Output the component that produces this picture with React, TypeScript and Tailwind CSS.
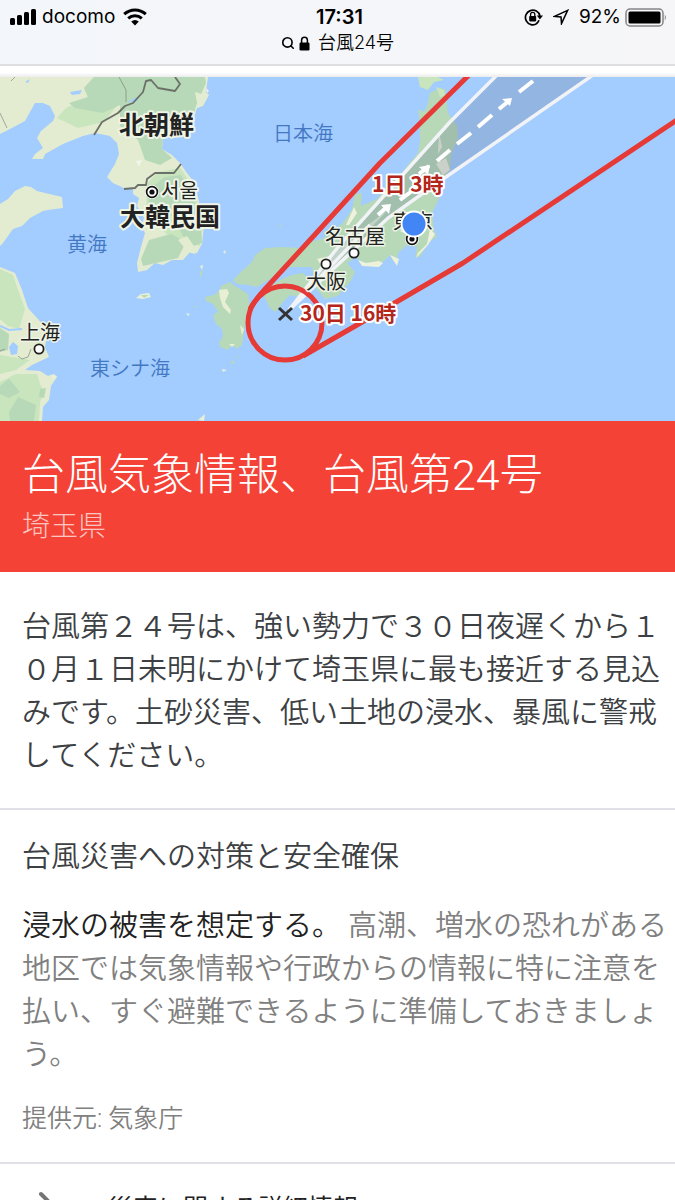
import { ChevronRight, Search } from "lucide-react";
import type { ReactNode } from "react";

const jp = "font-['Roboto','Noto_Sans_CJK_JP',sans-serif]";

const dashes = [
  "M400 200L412 191",
  "M419 174L429 166",
  "M437 161L450 150",
  "M457 144L471 133",
  "M478 127L492 115",
  "M499 109L510 100",
  "M519 92L533 81",
];

const seas = [
  { name: "日本海", x: 273, y: 141 },
  { name: "黄海", x: 67, y: 252 },
  { name: "東シナ海", x: 90, y: 376 },
];

const cities = [
  { name: "上海", x: 20, y: 340 },
  { name: "名古屋", x: 325, y: 244 },
  { name: "大阪", x: 306, y: 289 },
  { name: "東京", x: 393, y: 229 },
];

function StatusBar() {
  return (
    <header className="h-[66px] border-b-2 border-[#dfdfe1] bg-gradient-to-r from-[#f3f6fa] to-[#f6f6f8] px-2 font-['Inter','Noto_Sans_CJK_JP',sans-serif] text-black">
      <div className="grid grid-cols-3 items-center pt-1">
        <div className="flex items-center">
          <svg width="28" height="18" viewBox="0 0 28 18" aria-label="電波">
            <rect x="2" y="10" width="5" height="7" rx="1.5" />
            <rect x="9" y="7" width="5" height="10" rx="1.5" />
            <rect x="16" y="4" width="5" height="13" rx="1.5" />
            <rect x="23" y="1" width="5" height="16" rx="1.5" />
          </svg>
          <span className="ml-1.5 text-[19px] leading-[26px]">docomo</span>
          <svg className="ml-2" width="24" height="18" viewBox="0 0 24 18" aria-label="Wi-Fi">
            <g fill="none" stroke="#000" strokeWidth="3">
              <path d="M1.2 6.2C7.4.6 16.6.6 22.8 6.2" />
              <path d="M5.2 10.4C9.2 6.8 14.8 6.8 18.8 10.4" />
            </g>
            <path d="M8.2 13.4Q12 10.4 15.8 13.4L12 17.4Z" />
          </svg>
        </div>
        <div className="pl-1 text-center text-[20px] leading-[26px] font-semibold">17:31</div>
        <div className="flex items-center justify-end">
          <svg width="19" height="18" viewBox="0 0 19 18" aria-label="画面の向きをロック">
            <path
              d="M13 15.4A7.3 7.3 0 1 1 15.9 8M12 16A7.3 7.3 0 0 0 15 12.3"
              fill="none"
              stroke="#000"
              strokeWidth="1.7"
            />
            <path d="M12.8 7.6H19L15.9 11.4Z" />
            <rect x="5.2" y="8" width="7" height="5.4" rx=".8" />
            <path d="M6.6 8V6.4a2.1 2.1 0 0 1 4.2 0V8" fill="none" stroke="#000" strokeWidth="1.3" />
          </svg>
          <svg className="ml-2.5" width="16" height="16" viewBox="0 0 16 16" aria-label="位置情報">
            <path d="M14.6 1.4L1.6 7.4L8 8L8.5 14.6Z" fill="none" stroke="#000" strokeWidth="1.5" />
          </svg>
          <span className="ml-2.5 text-[19px] leading-[26px]">92%</span>
          <svg className="ml-1" width="42" height="19" viewBox="0 0 42 19" aria-label="バッテリー">
            <rect x="1" y="1" width="37" height="17" rx="4" fill="none" stroke="#858587" strokeWidth="1.5" />
            <rect x="3.5" y="3.5" width="32" height="12" rx="1.5" />
            <path d="M39.8 6.5Q42 9.5 39.8 12.5Z" fill="#858587" />
          </svg>
        </div>
      </div>
      <div className="flex items-center justify-center">
        <Search className="size-3.5" strokeWidth={2.8} />
        <svg className="ml-1" width="11" height="15" viewBox="0 0 11 15" aria-label="保護された接続">
          <rect x=".5" y="6.5" width="10" height="8" rx="1.2" />
          <path d="M2.6 7V4.2a2.9 2.9 0 0 1 5.8 0V7" fill="none" stroke="#000" strokeWidth="1.5" />
        </svg>
        <span className="ml-2 text-[18px] leading-[26px] font-[350]">台風24号</span>
      </div>
    </header>
  );
}

function Lands() {
  return (
    <g>
      {/* continent and the korean peninsula */}
      <path
        fill="#e3ecd1"
        d="M0 77H208L206 92L209 95L203 106L197 108L192 124L180 133L163 138L162 149L172 155L180 163L187 173L194 182L197 193L200 206L204 226L202 244L197 253L190 252L183 260L172 260L163 265L155 263L147 270L138 272L137 263L141 247L145 233L141 226L144 218L137 206L139 198L133 194L133 188L124 188L113 183L107 177L115 164L119 154L117 143L110 136L95 133L83 136L63 144L45 154L43 159L32 159L35 154L43 148L37 138L41 131L53 121L55 116L50 106L43 103L35 103L25 121L10 129L0 134Z"
      />
      <path fill="#c8e5be" d="M94 77L84 88L88 97L66 108L57 118L78 128L104 122L128 92L140 77Z" />
      <path fill="#b7d9b8" d="M94 77L84 88L88 97L69 103L75 108L103 113L120 105L120 126L138 140L145 160L160 165L172 158L162 149L163 138L192 122L196 106L206 83L205 77Z" />
      <path fill="#c8e5be" d="M158 172L180 168L194 188L203 226L200 246L186 240L178 244L160 228L146 212L147 184Z" />
      <path fill="#b7d9b8" d="M165 177L181 175L193 197L201 226L202 243L194 246L182 235L176 219L163 210L149 214L148 190ZM149 240L171 234L186 242L178 258L143 266L141 259Z" />
      <path fill="#e3ecd1" d="M178 240L187 236L196 249L195 254L188 252ZM195 92L208 96L198 108Z" />
      <path fill="#a3ccff" d="M25 82L30 79L28 83ZM70 92L82 90L80 94L72 95ZM127 102L140 96L136 102Z" />
      <path fill="#f1f5ea" d="M136 161L142 160L139 167ZM206 88L209 91L207 93Z" />
      {/* china coast */}
      <path fill="#e3ecd1" d="M0 204L8 199L15 191L25 186L31 187L37 191L62 197L63 208L48 210L43 211L30 218L22 226L13 229L3 243L0 246Z" />
      <path
        fill="#e3ecd1"
        d="M0 267L15 273L22 290L28 308L37 318L48 330L45 347L49 357L32 365L25 370L40 371L48 376L54 374L57 377L51 386L49 400L43 407L42 421H0Z"
      />
      <path fill="#c8e5be" d="M0 269L13 275L18 290L25 309L19 329L8 326L0 319ZM0 355L30 360L16 370L0 374ZM16 374L37 374L40 384L44 391L40 402L39 421H0V382Z" />
      <path fill="#b7d9b8" d="M0 328L9 334L8 350L0 352ZM0 386L9 379L20 392L9 398L0 394ZM9 412L18 397L36 405L34 421H10ZM40 389L46 388L44 398L39 397Z" />
      <path d="M0 326L9 330L22 329" fill="none" stroke="#a3ccff" strokeWidth="2" />
      <path fill="#a3ccff" d="M9 347L13 342L18 346L17 354L11 355Z" />
      {/* small islands */}
      <path fill="#e9f0d8" d="M136 298L141 294L149 293L151 297L143 299ZM186 313L190 314L188 316ZM200 266L203 265L202 270ZM50 375L57 376L54 379ZM198 420L205 414L204 421ZM222 369L227 370L223 372ZM223 252L226 250L225 254Z" />
      <path fill="#b7d9b8" d="M141 295L149 295L144 298ZM200 272L203 270L200 279ZM194 305L197 307L195 308ZM279 225L283 225L280 227ZM236 357L239 355L237 359ZM231 361L235 361L232 365Z" />
      {/* kyushu */}
      <path
        fill="#b7d9b8"
        d="M205 297L214 295L219 291L221 286L230 282L235 286L242 290L248 294L250 308L245 326L242 345L236 349L232 344L228 350L220 347L219 343L223 336L222 329L216 324L213 315L218 312L213 304L206 301Z"
      />
      <path fill="#e9efd3" d="M219 290L227 289L229 293L225 302L231 310L230 314L223 307L220 298ZM240 325L244 329L242 335ZM229 344L235 344L232 347Z" />
      {/* honshu */}
      <path
        fill="#b7d9b8"
        d="M233 280L243 270L252 262L255 255L265 248L283 247L300 248L310 242L322 239L343 223L352 209L355 194L362 193L361 206L377 199L387 186L402 173L407 166L418 153L420 140L420 123L418 109L424 112L427 106L430 93L440 88L445 89L447 104L448 113L457 126L458 138L451 155L450 169L441 183L439 199L432 213L434 230L437 237L429 242L420 257L415 257L417 247L407 245L398 253L397 264L392 260L390 255L382 263L365 265L356 257L347 263L355 272L350 282L338 296L325 299L315 287L312 267L290 267L273 277L257 287L248 285L237 284Z"
      />
      <path fill="#c8e5be" d="M418 77H438L444 80L434 82L428 90L420 87ZM436 87L444 90L445 96L440 97Z" />
      <path fill="#eef2dd" d="M346 225L354 207L357 213L349 225ZM430 229L435 234L428 245L416 258L418 253L427 244ZM358 260L366 263L379 261L383 263L379 267L362 266ZM390 255L399 259L397 266ZM317 259L330 256L334 264L322 267ZM436 164L446 158L450 170L443 175ZM439 132L442 147L438 154Z" />
      {/* shikoku */}
      <path
        fill="#b7d9b8"
        d="M264 296L269 287L280 280L292 275L303 273L312 281L309 290L300 297L290 295L283 302L278 309L275 312L269 307L267 302Z"
      />
    </g>
  );
}

function CityDot({ x, y }: { x: number; y: number }) {
  return <circle cx={x} cy={y} r="4.6" fill="#fff" stroke="#222" strokeWidth="1.8" />;
}

function Capital({ x, y }: { x: number; y: number }) {
  return (
    <g>
      <circle cx={x} cy={y} r="7" fill="#fff" />
      <circle cx={x} cy={y} r="5.4" fill="none" stroke="#111" strokeWidth="1.7" />
      <circle cx={x} cy={y} r="2.6" fill="#111" />
    </g>
  );
}

function TyphoonMap() {
  return (
    <svg viewBox="0 77 675 344" className={`block w-full bg-[#a3ccff] ${jp}`} role="img" aria-label="台風24号の進路図">
      <Lands />
      {/* borders */}
      <g fill="none" stroke="#6b7069" strokeWidth="1.8" strokeLinejoin="round">
        <path d="M94 135L102 122L118 113L125 106L133 103L143 92L146 81L151 80L158 88L175 91L180 84L175 77" />
        <path d="M124 189L135 188L138 185L146 185L147 179L155 173L174 173L181 164" />
        <path d="M119 77L126 90L126 102M11 81L15 77M0 113L7 128M0 351L5 349M18 356L22 359L28 357L31 349" strokeWidth=".8" opacity=".7" />
      </g>

      {/* forecast cone */}
      <path d="M287 311L338 247L450 121L496 75H593L443 179L388 218Z" fill="#63708b" fillOpacity=".25" />
      <path d="M289 311L338 247L388 210Z" fill="#fff" fillOpacity=".35" />
      <g fill="none" stroke="#f1f3f7" strokeWidth="3.5">
        <path d="M289 310L338 247L450 122L497 75" />
        <path d="M289 310L388 218L443 179L593 75" />
        <path d="M291 308L370 225" />
      </g>
      <g fill="none" stroke="#fff" strokeWidth="4">
        {dashes.map((d) => (
          <path key={d} d={d} />
        ))}
        <path d="M378 215L388 206" />
      </g>
      <path d="M381 205L391 204L389 214ZM419 167L430 165L428 175ZM502 99L512 98L510 106Z" fill="#fff" />

      {/* storm area */}
      <g fill="none" stroke="#e53a35" strokeWidth="5" strokeLinejoin="round">
        <path d="M250 309Q255 300 266 288L320 229L380 163L470 74" />
        <path d="M303 356L357 325L463 263L680 118" />
        <circle cx="285" cy="323" r="37" />
      </g>

      <g fontSize="20" fontWeight="350" fill="#4277c2">
        {seas.map((s) => (
          <text key={s.name} x={s.x} y={s.y}>
            {s.name}
          </text>
        ))}
      </g>

      <g stroke="#eef4e6" strokeWidth="4" strokeLinejoin="round" paintOrder="stroke" fill="#222">
        <g fontSize="25" fontWeight="700">
          <text x="119" y="134">北朝鮮</text>
          <text x="120" y="226">大韓民国</text>
        </g>
        <text x="161" y="198" fontSize="20" className="font-['Noto_Sans_CJK_KR',sans-serif]">
          서울
        </text>
        <g fontSize="20" strokeWidth="3">
          {cities.map((c) => (
            <text key={c.name} x={c.x} y={c.y}>
              {c.name}
            </text>
          ))}
        </g>
      </g>

      <Capital x={152} y={192} />
      <Capital x={412} y={239} />
      <CityDot x={39} y={349} />
      <CityDot x={326} y={264} />
      <CityDot x={354} y={253} />

      <circle cx="414" cy="224" r="12.5" fill="#4285f4" stroke="#fff" strokeWidth="2" />
      <path d="M279 308L292 320M292 308L279 320" stroke="#333" strokeWidth="3" />

      <g
        fontSize="21"
        fontWeight="700"
        fill="#b3261b"
        stroke="#fff"
        strokeWidth="4"
        strokeLinejoin="round"
        paintOrder="stroke"
        className="font-['Noto_Sans_CJK_JP',sans-serif]"
      >
        <text x="372" y="192">1日 3時</text>
        <text x="300" y="321">30日 16時</text>
      </g>
    </svg>
  );
}

function Section({ children }: { children: ReactNode }) {
  return <section className="border-b-2 border-[#e0e0e6] pr-1 pl-[22px]">{children}</section>;
}

export default function App() {
  return (
    <div className={`h-screen overflow-hidden bg-white ${jp}`} lang="ja">
      <StatusBar />
      <div className="h-[11px] bg-gradient-to-b from-white from-60% to-[#ececec]" />
      <main>
        <TyphoonMap />
        <div className="bg-[#f44336] px-[22px] pt-6 pb-6">
          <h1 className="text-[43px] leading-[60px] font-light text-white">台風気象情報、台風第24号</h1>
          <p className="text-[28px] leading-[43px] font-light text-white/70">埼玉県</p>
        </div>

        <Section>
          <p className="pt-[34px] pb-[30px] text-[29px] leading-[43px] font-[350] text-[#3c4043]">
            台風第２４号は、強い勢力で３０日夜遅くから１０月１日未明にかけて埼玉県に最も接近する見込みです。土砂災害、低い土地の浸水、暴風に警戒してください。
          </p>
        </Section>

        <Section>
          <h2 className="pt-[26px] text-[29px] leading-[43px] font-[350] text-[#3c4043]">台風災害への対策と安全確保</h2>
          <p className="pt-[26px] text-[29px] leading-[43px] font-[350] text-[#808080]">
            <span className="text-[#222]">浸水の被害を想定する。</span>{" "}
            高潮、増水の恐れがある地区では気象情報や行政からの情報に特に注意を払い、すぐ避難できるように準備しておきましょう。
          </p>
          <p className="pt-5 pb-[22px] text-[25px] leading-[43px] font-[350] text-[#808080]">提供元: 気象庁</p>
        </Section>

        <a href="#details" className="flex items-center py-4 pl-5 text-[25px] leading-[43px] text-[#222]">
          <ChevronRight className="size-14 text-[#757575]" strokeWidth={1.7} />
          <span className="ml-8">災害に関する詳細情報</span>
        </a>
      </main>
    </div>
  );
}
